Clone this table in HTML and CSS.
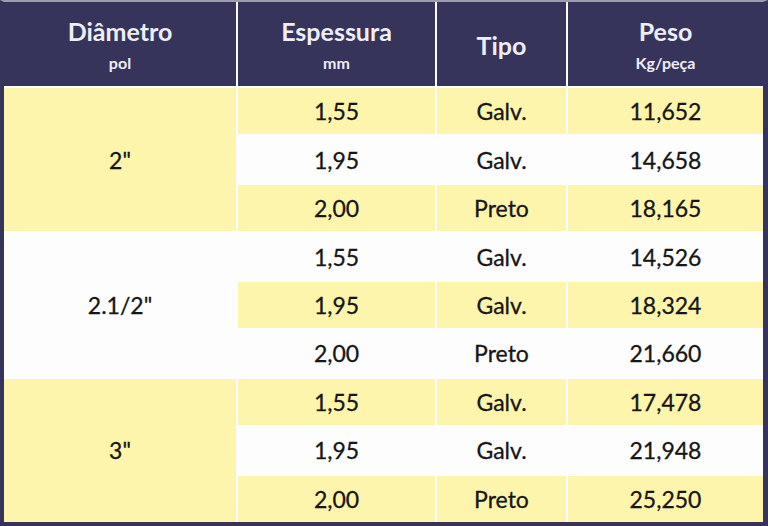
FILE: index.html
```html
<!DOCTYPE html>
<html lang="pt">
<head>
<meta charset="utf-8">
<title>Tabela de tubos</title>
<link rel="stylesheet" href="styles.css">
</head>
<body>
<div class="frame">
  <div class="grid">
    <div class="th"><span class="t">Diâmetro</span><span class="s">pol</span></div>
    <div class="th"><span class="t">Espessura</span><span class="s">mm</span></div>
    <div class="th"><span class="t">Tipo</span></div>
    <div class="th"><span class="t">Peso</span><span class="s">Kg/peça</span></div>

    <div class="td diam y">2"</div>
    <div class="td y">1,55</div><div class="td y">Galv.</div><div class="td y">11,652</div>
    <div class="td w">1,95</div><div class="td w">Galv.</div><div class="td w">14,658</div>
    <div class="td y">2,00</div><div class="td y">Preto</div><div class="td y">18,165</div>

    <div class="td diam w">2.1/2"</div>
    <div class="td w">1,55</div><div class="td w">Galv.</div><div class="td w">14,526</div>
    <div class="td y">1,95</div><div class="td y">Galv.</div><div class="td y">18,324</div>
    <div class="td w">2,00</div><div class="td w">Preto</div><div class="td w">21,660</div>

    <div class="td diam y">3"</div>
    <div class="td y">1,55</div><div class="td y">Galv.</div><div class="td y">17,478</div>
    <div class="td w">1,95</div><div class="td w">Galv.</div><div class="td w">21,948</div>
    <div class="td y">2,00</div><div class="td y">Preto</div><div class="td y">25,250</div>
  </div>
</div>
</body>
</html>
```
FILE: styles.css
```css
html, body {
  margin: 0;
  padding: 0;
  background: #ffffff;
}
.frame {
  width: 768px;
  height: 526px;
  box-sizing: border-box;
  border-top: 2px solid #9d9cb0;
  border-left: 4px solid #36345a;
  border-right: 5px solid #36345a;
  border-bottom: 4px solid #36345a;
  background: #ffffff;
}
.grid {
  display: grid;
  grid-template-columns: 232px 197px 129px 195px;
  grid-template-rows: 84px repeat(9, 1fr);
  gap: 2px;
  height: 100%;
  background: #fdfdfd;
  font-family: Lato, "Open Sans", sans-serif;
}
.th {
  background: #36345a;
  color: #eeeef4;
  display: flex;
  flex-direction: column;
  align-items: center;
  justify-content: center;
  padding-top: 2px;
  box-sizing: border-box;
}
.th .t {
  font-size: 25px;
  font-weight: 700;
  line-height: 32px;
}
.th .s {
  font-size: 16px;
  font-weight: 700;
  line-height: 24px;
  margin-top: 4px;
}
.td {
  display: flex;
  align-items: center;
  justify-content: center;
  font-size: 23px;
  color: #161616;
  -webkit-text-stroke: 0.3px #161616;
}
.diam {
  grid-row: span 3;
}
.y {
  background: #fef5ac;
}
.w {
  background: #fdfdfd;
}
```
